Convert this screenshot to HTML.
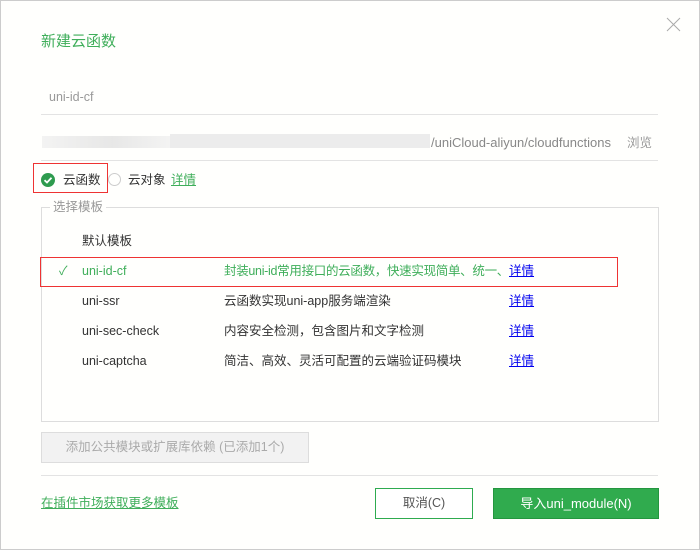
<!DOCTYPE html>
<html><head><meta charset="utf-8"><style>
*{margin:0;padding:0;box-sizing:border-box}
body{width:700px;height:550px;background:#fffffd;font-family:"Liberation Sans","Noto Sans CJK SC",sans-serif;font-size:12.5px;color:#333;position:relative;overflow:hidden}
.a{position:absolute;white-space:nowrap;line-height:16px}
.hl{position:absolute;height:1px;background:#e3e3e3}
.lk{text-decoration:underline;color:#0000ee}
</style></head><body>
<div style="position:absolute;left:0;top:0;width:700px;height:550px;border:1px solid #ccc"></div>
<svg style="position:absolute;left:666px;top:17px" width="15" height="15"><path d="M1 1 14 14M14 1 1 14" stroke="#aaa" stroke-width="1"/></svg>
<div class="a" style="left:41px;top:34px;font-size:15px;color:#3fae5a">新建云函数</div>
<div class="a" style="left:49px;top:89px;color:#999">uni-id-cf</div>
<div class="hl" style="left:41px;top:114px;width:617px"></div>
<div style="position:absolute;left:42px;top:136px;width:280px;height:12px;background:linear-gradient(90deg,#eee,#ddd,#f2f2f2,#e5e5e5,#eaeaea);opacity:.7"></div>
<div style="position:absolute;left:170px;top:134px;width:260px;height:14px;background:#ececec"></div>
<div class="a" style="left:431px;top:135px;color:#888;font-size:13px">/uniCloud-aliyun/cloudfunctions</div>
<div class="a" style="left:627px;top:135px;color:#999">浏览</div>
<div class="hl" style="left:41px;top:160px;width:617px"></div>
<div style="position:absolute;left:33px;top:163px;width:75px;height:30px;border:1px solid #e33"></div>
<div style="position:absolute;left:41px;top:173px;width:14px;height:14px;border-radius:50%;background:#2e9b4e"><svg width="14" height="14" style="position:absolute;left:0;top:0"><path d="M3.5 7.2 6 9.5 10.5 4.8" stroke="#fff" stroke-width="1.8" fill="none"/></svg></div>
<div class="a" style="left:63px;top:172px">云函数</div>
<div style="position:absolute;left:108px;top:173px;width:13px;height:13px;border-radius:50%;border:1px solid #ccc"></div>
<div class="a" style="left:128px;top:172px">云对象</div>
<div class="a" style="left:171px;top:172px;color:#3fae5a;text-decoration:underline">详情</div>
<div style="position:absolute;left:41px;top:207px;width:618px;height:215px;border:1px solid #ddd"></div>
<div class="a" style="left:50px;top:199px;padding:0 3px;background:#fffffd;color:#999">选择模板</div>
<div class="a" style="left:82px;top:233px">默认模板</div>
<div style="position:absolute;left:40px;top:257px;width:578px;height:30px;border:1px solid #e33"></div>
<div class="a" style="left:59px;top:263px;color:#3fae5a">✓</div>
<div class="a" style="left:82px;top:263px;color:#3fae5a">uni-id-cf</div>
<div class="a" style="left:224px;top:263px;color:#3fae5a;letter-spacing:-0.3px">封装uni-id常用接口的云函数，快速实现简单、统一、</div>
<div class="a lk" style="left:509px;top:263px">详情</div>
<div class="a" style="left:82px;top:293px">uni-ssr</div>
<div class="a" style="left:224px;top:293px">云函数实现uni-app服务端渲染</div>
<div class="a lk" style="left:509px;top:293px">详情</div>
<div class="a" style="left:82px;top:323px">uni-sec-check</div>
<div class="a" style="left:224px;top:323px">内容安全检测，包含图片和文字检测</div>
<div class="a lk" style="left:509px;top:323px">详情</div>
<div class="a" style="left:82px;top:353px">uni-captcha</div>
<div class="a" style="left:224px;top:353px">简洁、高效、灵活可配置的云端验证码模块</div>
<div class="a lk" style="left:509px;top:353px">详情</div>
<div style="position:absolute;left:41px;top:432px;width:268px;height:31px;background:#f2f2f2;border:1px solid #ddd;color:#aaa;text-align:center;line-height:29px">添加公共模块或扩展库依赖 (已添加1个)</div>
<div class="hl" style="left:41px;top:475px;width:617px"></div>
<div class="a" style="left:41px;top:495px;color:#3fae5a;text-decoration:underline">在插件市场获取更多模板</div>
<div style="position:absolute;left:375px;top:488px;width:98px;height:31px;border:1px solid #2eab4f;background:#fff;color:#555;text-align:center;line-height:29px">取消(C)</div>
<div style="position:absolute;left:493px;top:488px;width:166px;height:31px;border:1px solid #24963f;background:#30ab4e;color:#fff;text-align:center;line-height:29px;font-size:13px">导入uni_module(N)</div>
</body></html>
